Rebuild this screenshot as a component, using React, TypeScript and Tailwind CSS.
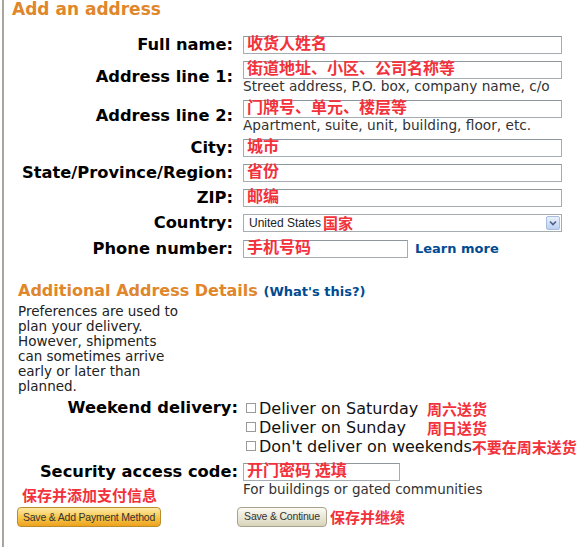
import React from "react";

// Address form, second step of checkout (annotated with Chinese hints)

const sans = "font-['DejaVu_Sans',sans-serif]";
const hint = "font-['Noto_Sans_CJK_SC',sans-serif] font-bold text-[#f2313b]";

interface Row {
  label: string;
  value: string;
  help?: string;
}

const rows: Row[] = [
  { label: "Full name:", value: "收货人姓名" },
  {
    label: "Address line 1:",
    value: "街道地址、小区、公司名称等",
    help: "Street address, P.O. box, company name, c/o",
  },
  {
    label: "Address line 2:",
    value: "门牌号、单元、楼层等",
    help: "Apartment, suite, unit, building, floor, etc.",
  },
  { label: "City:", value: "城市" },
  { label: "State/Province/Region:", value: "省份" },
  { label: "ZIP:", value: "邮编" },
];

const TextBox: React.FC<{ value: string; className?: string }> = ({
  value,
  className = "w-[319px]",
}) => (
  <div
    className={`${className} h-[18px] border border-[#a5acb2] border-t-[#8e969e] bg-white pl-[3px] text-[16px] leading-[11px] whitespace-nowrap ${hint}`}
  >
    {value}
  </div>
);

const Label: React.FC<{ children: React.ReactNode }> = ({ children }) => (
  <div
    className={`text-right text-[16.3px] leading-[18px] font-bold text-black whitespace-nowrap ${sans}`}
  >
    {children}
  </div>
);

const Check: React.FC<{ text: string; note: string; fixed?: boolean }> = ({
  text,
  note,
  fixed = true,
}) => (
  <div className="flex h-[19px] items-center">
    <span className="ml-[3px] inline-block h-[10px] w-[10px] border border-[#9a9a9a] bg-white" />
    <span
      className={`ml-[3px] text-[16px] leading-[19px] text-[#111] whitespace-nowrap ${sans} ${
        fixed ? "w-[168px]" : ""
      }`}
    >
      {text}
    </span>
    <span className={`text-[15px] leading-[19px] ${hint}`}>{note}</span>
  </div>
);

const prefs = [
  "Preferences are used to",
  "plan your delivery.",
  "However, shipments",
  "can sometimes arrive",
  "early or later than",
  "planned.",
];

export default function App() {
  return (
    <div className="h-[547px] w-[580px] overflow-hidden bg-white">
      <div className="ml-[2px] h-full border-l-2 border-[#aaa59c]">
        {/* Title */}
        <div className="h-[36px] pl-[8px]">
          <h1
            className={`text-[17px] leading-[18px] font-bold text-[#e0862b] ${sans}`}
          >
            Add an address
          </h1>
        </div>

        {/* Address fields */}
        <div className="grid grid-cols-[229px_319px] items-center gap-x-[10px] gap-y-[7px]">
          {rows.map((row) => (
            <React.Fragment key={row.label}>
              <Label>{row.label}</Label>
              <div>
                <TextBox value={row.value} />
                {row.help && (
                  <div
                    className={`text-[13.7px] leading-[14px] text-[#333] whitespace-nowrap ${sans}`}
                  >
                    {row.help}
                  </div>
                )}
              </div>
            </React.Fragment>
          ))}

          <Label>Country:</Label>
          <div className="flex h-[18px] w-[319px] items-center border border-[#a5acb2] bg-white pl-[5px]">
            <span className="font-['Liberation_Sans',sans-serif] text-[12px] text-[#222]">
              United States
            </span>
            <span className={`ml-[2px] text-[15px] leading-[12px] ${hint}`}>国家</span>
            <span className="ml-auto mr-px flex h-[14px] w-[14px] items-center justify-center rounded-[2px] border border-[#a9bde0] bg-linear-to-b from-[#eaf1fc] to-[#bcd0f1]">
              <svg width="8" height="6" viewBox="0 0 8 6">
                <path
                  d="M1 1.5 L4 4.5 L7 1.5"
                  fill="none"
                  stroke="#4d6185"
                  strokeWidth="1.6"
                />
              </svg>
            </span>
          </div>

          <Label>Phone number:</Label>
          <div className="flex items-center">
            <TextBox value="手机号码" className="w-[165px]" />
            <a
              href="#"
              className={`ml-[7px] text-[13px] font-bold text-[#004b91] ${sans}`}
            >
              Learn more
            </a>
          </div>
        </div>

        {/* Additional details */}
        <div className="mt-[24px] pl-[14px]">
          <div className={`text-[16px] leading-[16px] font-bold ${sans}`}>
            <span className="text-[#e0862b]">Additional Address Details</span>{" "}
            <span className="text-[13px] text-[#004b91]">
              (<a href="#">What's this?</a>)
            </span>
          </div>
          <p
            className={`mt-[4px] text-[13.5px] leading-[15px] text-[#222] ${sans}`}
          >
            {prefs.map((line) => (
              <span key={line} className="block">
                {line}
              </span>
            ))}
          </p>
        </div>

        <div className="mt-[5px] grid grid-cols-[234px_1fr] gap-x-[5px]">
          <div className="leading-[19px]">
            <Label>Weekend delivery:</Label>
          </div>
          <div>
            <Check text="Deliver on Saturday" note="周六送货" />
            <Check text="Deliver on Sunday" note="周日送货" />
            <Check text="Don't deliver on weekends" note="不要在周末送货" fixed={false} />
          </div>

          <div className="mt-[7px]">
            <Label>Security access code:</Label>
            <div className={`mt-[6px] ml-[18px] text-[15px] leading-[16px] ${hint}`}>
              保存并添加支付信息
            </div>
            <button
              type="button"
              className="mt-[4px] ml-[13px] h-[20px] w-[144px] rounded-[4px] border border-[#b98d2c] bg-linear-to-b from-[#fdeaa6] via-[#f8c84a] to-[#eda21a] px-0 font-['Liberation_Sans',sans-serif] text-[10.5px] tracking-[-0.2px] whitespace-nowrap text-[#333]"
            >
              Save &amp; Add Payment Method
            </button>
          </div>
          <div className="mt-[7px]">
            <TextBox value="开门密码 选填" className="w-[157px]" />
            <div
              className={`mt-px text-[13.5px] leading-[15px] text-[#333] ${sans}`}
            >
              For buildings or gated communities
            </div>
            <div className="mt-[10px] -ml-[6px] flex items-center">
              <button
                type="button"
                className="h-[20px] w-[90px] rounded-[4px] border border-[#a8a38b] bg-linear-to-b from-[#fcfbf4] to-[#d8d4bb] px-0 font-['Liberation_Sans',sans-serif] text-[10.5px] tracking-[-0.2px] whitespace-nowrap text-[#333]"
              >
                Save &amp; Continue
              </button>
              <span className={`ml-[3px] text-[15px] leading-[16px] ${hint}`}>
                保存并继续
              </span>
            </div>
          </div>
        </div>
      </div>
    </div>
  );
}
